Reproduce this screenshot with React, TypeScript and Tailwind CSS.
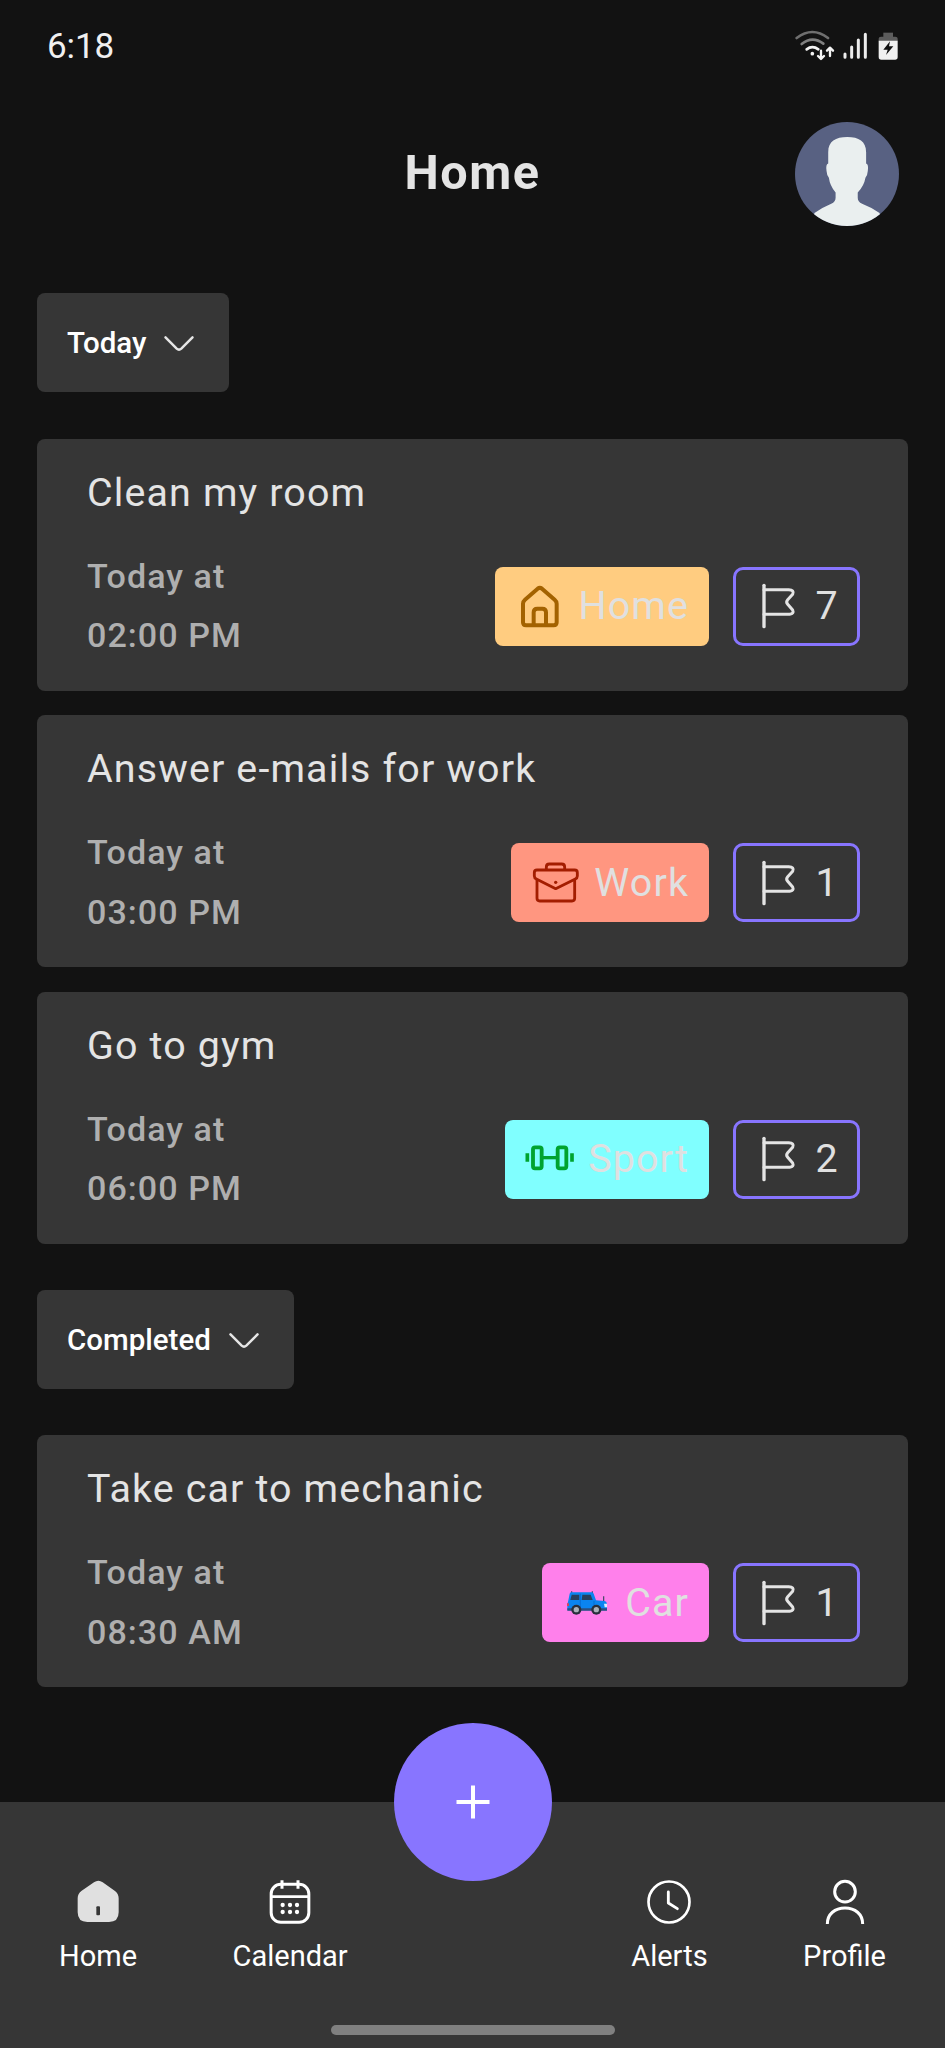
import type { ReactNode } from "react";

function StatusIcons() {
  return (
    <svg width="107" height="34" viewBox="100 55 321 102" fill="none" strokeLinecap="round">
      <path d="M111 82 Q158 46 205 82" stroke="#6f6f6f" strokeWidth="8" />
      <path d="M126 100 Q158 74 191 99" stroke="#808080" strokeWidth="8" />
      <path d="M141 116 Q158 103 176 116" stroke="#f4f4f4" strokeWidth="8" />
      <circle cx="158" cy="129" r="5.5" fill="#f4f4f4" />
      <g stroke="#f4f4f4" strokeWidth="7" strokeLinejoin="round">
        <path d="M184 120 V145 M175 136 L184 145 L193 136" />
        <path d="M211 136 V111 M202 120 L211 111 L220 120" />
      </g>
      <g stroke="#ececec" strokeWidth="9">
        <path d="M256 130 V140 M276 109 V140 M296 88 V140 M317 71 V140" />
      </g>
      <path d="M371 92 V66 H400 V92 Z" fill="#5c5c5c" />
      <path d="M357 92 V84 Q357 78 364 78 H407 Q414 78 414 84 V92 Z" fill="#5c5c5c" />
      <path d="M357 90 H414 V139 Q414 147 406 147 H365 Q357 147 357 139 Z" fill="#f0f0f0" />
      <path d="M391 92 L371 117 H384 L379 133 L401 107 H388 Z" fill="#121212" />
    </svg>
  );
}

function Avatar() {
  return (
    <svg width="104" height="104" viewBox="0 0 310 310">
      <defs>
        <clipPath id="avatar-clip">
          <circle cx="155" cy="155" r="155" />
        </clipPath>
      </defs>
      <g clipPath="url(#avatar-clip)">
        <rect width="310" height="310" fill="#586182" />
        <path
          d="M156 45 C190 45 212 58 212 90 V124 Q220 127 217 146 Q216 160 210 166 Q206 190 187 210 V226 Q187 238 200 244 Q230 256 252 271 L262 310 H48 L58 271 Q80 256 108 244 Q121 238 121 226 V210 Q104 190 101 166 Q95 160 94 146 Q91 127 99 124 V90 C99 58 121 45 156 45 Z"
          fill="#eaefef"
        />
      </g>
    </svg>
  );
}

function ChevronIcon() {
  return (
    <svg className="mt-[2px]" width="32" height="20" viewBox="0 0 32 20" fill="none" stroke="#e6e6e6" strokeWidth="2.5" strokeLinecap="round">
      <path d="M2.5 3.4 L13.7 14.6 Q16 16.6 18.3 14.6 L29.5 3.4" />
    </svg>
  );
}

function HouseIcon() {
  return (
    <svg width="63" height="63" viewBox="0 0 189 189" fill="none" stroke="#a36200" strokeWidth="12" strokeLinejoin="round">
      <path d="M45 86 Q45 79 51 74 L89 41 Q95.500 36 102 41 L140 74 Q146 79 146 86 V142 Q146 151 137 151 H54 Q45 151 45 142 Z" />
      <path d="M77 151 V112 Q77 101 88 101 H103 Q114 101 114 112 V151" />
    </svg>
  );
}

function BriefcaseIcon() {
  return (
    <svg width="63" height="63" viewBox="0 0 189 189" fill="none" stroke="#a31d00" strokeWidth="8.5" strokeLinejoin="round">
      <path d="M67 57 V48 Q67 39 76 39 H113 Q122 39 122 48 V57" />
      <path d="M39 57 H152 Q160 57 160 65 V75 Q160 81 154 84 L95 113 L37 84 Q31 81 31 75 V65 Q31 57 39 57 Z" />
      <path d="M39 87 V142 Q39 150 47 150 H144 Q152 150 152 142 V87" />
      <circle cx="95" cy="94" r="5" fill="#a31d00" stroke="none" />
    </svg>
  );
}

function DumbbellIcon() {
  return (
    <svg width="63" height="63" viewBox="0 0 189 189" fill="none" stroke="#00a32f" strokeWidth="11.500">
      <rect x="45" y="58" width="26" height="63" rx="6" />
      <rect x="119" y="58" width="26" height="63" rx="6" />
      <path d="M72 89 H118" strokeWidth="10" />
      <path d="M28 76 V101 M162 76 V101" strokeWidth="11" />
    </svg>
  );
}

function CarIcon() {
  return (
    <svg width="63" height="63" viewBox="0 0 189 189" fill="none">
      <path d="M50 61 V66 M112 61 V66 M146 76 V90" stroke="#3a4660" strokeWidth="3.500" />
      <path d="M39 93 L44 68 Q45 64 50 64 H110 Q114 64 116 68 L123 88 L148 90 Q155 91 156 98 V118 H37 V98 Z" fill="#0a84f0" />
      <path d="M50 71 H73 V87 H46 Z" fill="#26405e" />
      <path d="M82 71 H107 L113 87 H80 Z" fill="#26405e" />
      <path d="M76 68 V116 M117 90 V110" stroke="#0668cc" strokeWidth="2.500" />
      <path d="M37 112 H156 V119 H37 Z" fill="#2c4f80" />
      <path d="M36 97 h6 v8 h-6 Z" fill="#d8405a" />
      <path d="M147 98 h9 v11 h-7 Z" fill="#dcecff" />
      <circle cx="64" cy="116" r="15" fill="#29303d" />
      <circle cx="64" cy="116" r="8" fill="#a9b0b8" />
      <circle cx="124" cy="116" r="15" fill="#29303d" />
      <circle cx="124" cy="116" r="8" fill="#a9b0b8" />
    </svg>
  );
}

function FlagIcon() {
  return (
    <svg width="48" height="48" viewBox="0 0 144 144" fill="none" stroke="#e4e4e4" strokeWidth="9" strokeLinecap="round" strokeLinejoin="round">
      <path d="M21 10 V134" strokeWidth="10" />
      <path d="M21 23 H95 Q113 24 107 37 L92 53 Q86 60 92 67 L107 84 Q112 95 98 97 H21" />
    </svg>
  );
}

function NavHomeIcon() {
  return (
    <svg width="48" height="48" viewBox="0 0 144 144">
      <path d="M60 13 Q73 4 86 13 L123 39 Q134 48 134 61 V103 Q134 132 105 132 H40 Q11 132 11 103 V61 Q11 48 22 39 Z" fill="#e0e0e0" />
      <rect x="67" y="85" width="11" height="27" rx="3" fill="#363636" />
    </svg>
  );
}

function NavCalendarIcon() {
  const dots = [50, 72, 93];
  return (
    <svg width="48" height="48" viewBox="0 0 144 144" fill="none" stroke="#ffffff" strokeWidth="9">
      <rect x="15.500" y="19" width="113" height="114" rx="29" />
      <path d="M15 56 H129" strokeWidth="8" />
      <path d="M48 7 V32 M96 7 V32" strokeWidth="9" />
      {dots.map((x) => (
        <g key={x} fill="#ffffff" stroke="none">
          <circle cx={x} cy="81" r="6.500" />
          <circle cx={x} cy="102" r="6.500" />
        </g>
      ))}
    </svg>
  );
}

function NavClockIcon() {
  return (
    <svg width="48" height="48" viewBox="0 0 144 144" fill="none" stroke="#ffffff" strokeWidth="8.5" strokeLinecap="round" strokeLinejoin="round">
      <circle cx="72" cy="72" r="61.500" strokeWidth="8" />
      <path d="M70 42 V75 L97 92" />
    </svg>
  );
}

function NavProfileIcon() {
  return (
    <svg width="48" height="48" viewBox="0 0 144 144" fill="none" stroke="#ffffff" strokeWidth="9">
      <circle cx="72" cy="41" r="31" />
      <path d="M19 138 C19 108 42 90 72 90 C102 90 125 108 125 138" />
    </svg>
  );
}

function SectionButton({ label }: { label: string }) {
  return (
    <button className="flex h-[99px] items-center gap-[17px] self-start rounded-[8px] bg-[#363636] pt-px pr-[34px] pl-[30px] text-[29.5px] font-medium text-white">
      {label}
      <ChevronIcon />
    </button>
  );
}

type Task = {
  title: string;
  time: string;
  category: string;
  badge: string;
  icon: ReactNode;
  priority: number;
};

const todayTasks: Task[] = [
  { title: "Clean my room", time: "02:00 PM", category: "Home", badge: "bg-[#ffcc80]", icon: <HouseIcon />, priority: 7 },
  { title: "Answer e-mails for work", time: "03:00 PM", category: "Work", badge: "bg-[#ff9680]", icon: <BriefcaseIcon />, priority: 1 },
  { title: "Go to gym", time: "06:00 PM", category: "Sport", badge: "bg-[#80ffff]", icon: <DumbbellIcon />, priority: 2 },
];

const completedTasks: Task[] = [
  { title: "Take car to mechanic", time: "08:30 AM", category: "Car", badge: "bg-[#ff80eb]", icon: <CarIcon />, priority: 1 },
];

function TaskCard({ task }: { task: Task }) {
  return (
    <article className="flex h-[252px] flex-col rounded-[8px] bg-[#363636] pt-[27px] pr-[48px] pl-[50px]">
      <h2 className="text-[39.4px] leading-[54px] tracking-[1.14px] text-[#e4e4e4]">{task.title}</h2>
      <div className="mt-[26px] flex items-start justify-between">
        <p className="mt-px text-[34.1px] leading-[59.5px] font-medium tracking-[1.05px] text-[#afafaf]">
          Today at
          <br />
          {task.time}
        </p>
        <div className="mt-[21px] flex gap-[24px] text-[39.4px] leading-none tracking-[1.14px] text-[#e0e0e0]">
          <div className={`flex h-[79px] items-center gap-[7px] rounded-[8px] pr-[20px] pl-[13px] ${task.badge}`}>
            {task.icon}
            {task.category}
          </div>
          <div className="flex h-[79px] w-[127px] items-center gap-[10.5px] rounded-[10px] border-[3px] border-[#8875ff] pl-[21px]">
            <FlagIcon />
            {task.priority}
          </div>
        </div>
      </div>
    </article>
  );
}

function NavItem({ label, icon }: { label: string; icon: ReactNode }) {
  return (
    <div className="flex flex-col items-center gap-[13px]">
      {icon}
      <span className="text-[29px] leading-[34px] text-white">{label}</span>
    </div>
  );
}

export default function App() {
  return (
    <div className="flex h-[2048px] w-[945px] flex-col overflow-hidden bg-[#121212] font-[Roboto,sans-serif]">
      <div className="flex h-[92px] items-center justify-between pr-[45px] pl-[47px]">
        <span className="pt-[2px] text-[35px] tracking-[-0.1px] text-[#f0f0f0]">6:18</span>
        <StatusIcons />
      </div>

      <header className="grid h-[163px] grid-cols-[104px_1fr_104px] items-center pr-[46px] pl-[46px]">
        <span />
        <h1 className="text-center text-[48.5px] font-bold tracking-[1.5px] text-[#e4e4e4]">Home</h1>
        <Avatar />
      </header>

      <main className="flex grow flex-col px-[37px] pt-[38px]">
        <SectionButton label="Today" />
        <section className="mt-[46.5px] flex flex-col gap-[24.5px]">
          {todayTasks.map((task) => (
            <TaskCard key={task.title} task={task} />
          ))}
        </section>
        <div className="mt-[46.5px] flex">
          <SectionButton label="Completed" />
        </div>
        <section className="mt-[46px] flex flex-col gap-[24.5px]">
          {completedTasks.map((task) => (
            <TaskCard key={task.title} task={task} />
          ))}
        </section>
      </main>

      <nav className="relative flex h-[246px] shrink-0 flex-col justify-between bg-[#363636] pb-[13px]">
        <button className="absolute -top-[79px] left-1/2 flex size-[158px] -translate-x-1/2 items-center justify-center rounded-full bg-[#8875ff]">
          <svg width="34" height="34" viewBox="0 0 34 34" stroke="#ffffff" strokeWidth="4">
            <path d="M17 .5 V33.500 M.5 17 H33.500" />
          </svg>
        </button>
        <div className="flex justify-between px-[59px] pt-[76px]">
          <div className="flex gap-[95.5px]">
            <NavItem label="Home" icon={<NavHomeIcon />} />
            <NavItem label="Calendar" icon={<NavCalendarIcon />} />
          </div>
          <div className="flex gap-[95.5px]">
            <NavItem label="Alerts" icon={<NavClockIcon />} />
            <NavItem label="Profile" icon={<NavProfileIcon />} />
          </div>
        </div>
        <div className="h-[10px] w-[284px] self-center rounded-full bg-[#808080]" />
      </nav>
    </div>
  );
}
